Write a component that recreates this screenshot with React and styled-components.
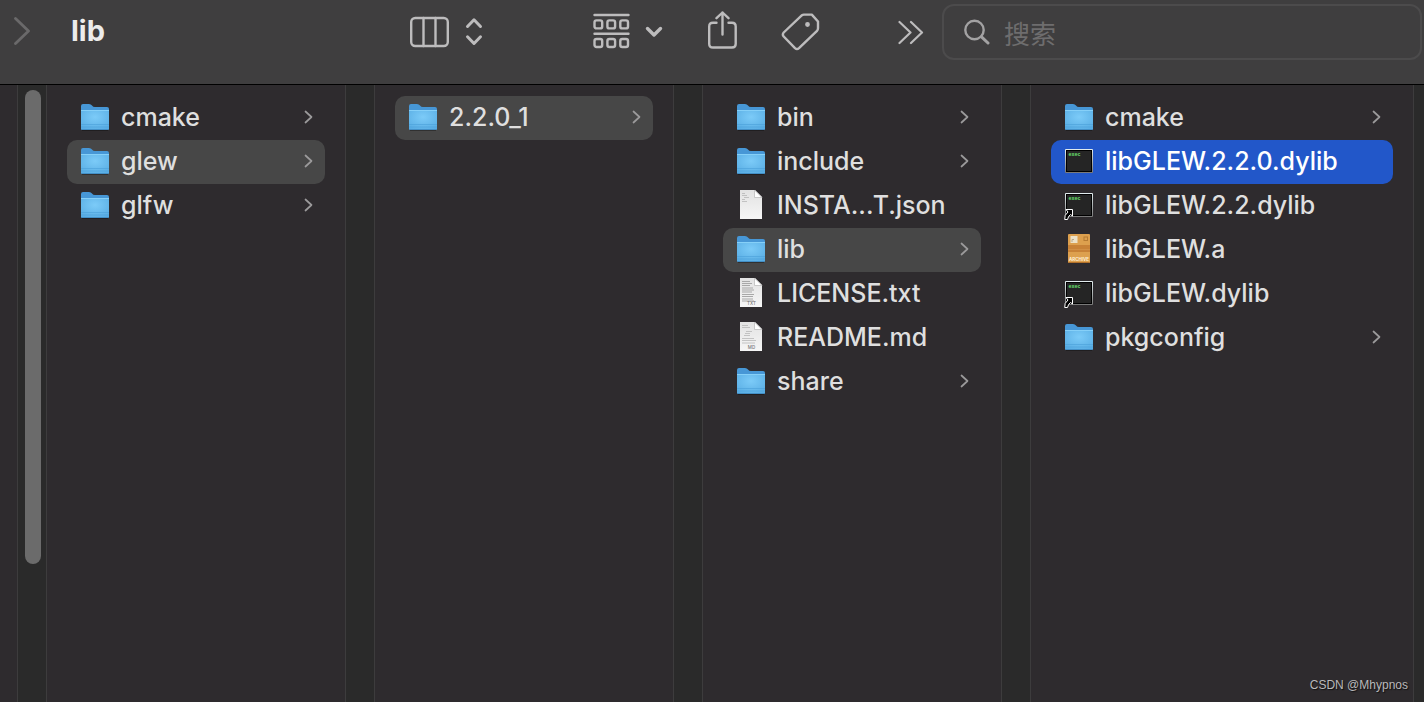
import React from 'react';
import styled, { createGlobalStyle } from 'styled-components';

const GlobalStyle = createGlobalStyle`
  * {
    box-sizing: border-box;
  }

  body {
    margin: 0;
    background: #2e2b2e;
    font-family: Inter, 'Noto Sans CJK SC', sans-serif;
  }

  button {
    border: 0;
    padding: 0;
    background: none;
    color: inherit;
    font: inherit;
  }

  svg {
    display: block;
    flex: none;
  }
`;

const Window = styled.div`
  display: flex;
  flex-direction: column;
  min-height: 100vh;
  overflow: hidden;
`;

const Toolbar = styled.header`
  display: flex;
  align-items: flex-start;
  padding: 4px 2px 24px 13px;
  background: #3f3e3f;
  color: #bdbcbd;
  border-bottom: 1px solid #000;
`;

const ToolButton = styled.button`
  display: flex;
  align-items: center;
  gap: ${({ $gap }) => $gap || 0}px;
  height: 56px;
  margin-right: ${({ $after }) => $after || 0}px;
  color: ${({ $dim }) => ($dim ? '#6a696a' : 'inherit')};
`;

const Title = styled.h1`
  flex: 0 1 339px;
  margin: 0;
  color: #ececec;
  font-size: 29px;
  font-weight: 700;
  line-height: 54px;
`;

const Search = styled.label`
  display: flex;
  flex: 1;
  align-items: center;
  gap: 14px;
  min-width: 0;
  height: 56px;
  padding: 0 20px;
  border: 2px solid #4c4b4c;
  border-radius: 12px;
  color: #a3a2a3;
`;

const SearchInput = styled.input`
  flex: 1;
  min-width: 0;
  height: 40px;
  padding: 0;
  border: 0;
  outline: 0;
  background: none;
  color: #dfdfdf;
  font-family: 'Noto Sans CJK SC', sans-serif;
  font-size: 26px;

  &::placeholder {
    color: #6e6d6e;
    opacity: 1;
  }
`;

const Browser = styled.main`
  display: flex;
  flex: 1;
`;

const Sliver = styled.div`
  flex: 0 0 17px;
`;

const Pane = styled.ul`
  flex: ${({ $fill }) => ($fill ? '1 1 0' : '0 0 298px')};
  margin: 0;
  padding: 11px 20px;
  list-style: none;
`;

const Track = styled.div`
  display: grid;
  flex: 0 0 ${({ $cut }) => ($cut ? 11 : 30)}px;
  grid-template-rows: 31fr 9fr;
  padding: ${({ $cut }) => ($cut ? '0' : '5px 5px 0 7px')};
  border: solid #3d3c3d;
  border-width: 0 ${({ $cut }) => ($cut ? 0 : 1)}px 0 1px;
  background: #2a2a2a;
`;

const Thumb = styled.div`
  border-radius: 8px;
  background: #6b6b6b;
`;

const backgrounds = { open: '#474747', active: '#2257c9' };

const Row = styled.button`
  display: flex;
  align-items: center;
  gap: 11px;
  width: 100%;
  height: 44px;
  padding: 0 11px 0 13px;
  border-radius: 10px;
  background: ${({ $state }) => backgrounds[$state] || 'transparent'};
  color: ${({ $state }) => ($state === 'active' ? '#fff' : '#dfdfdf')};
  font-size: 25px;
  font-weight: 500;
  line-height: 44px;
  text-align: left;
`;

const Name = styled.span`
  flex: 1;
  min-width: 0;
  height: 46px;
  white-space: nowrap;
`;

const Watermark = styled.div`
  position: absolute;
  right: 16px;
  bottom: 9px;
  color: #b9b8b9;
  font-family: 'Liberation Sans', sans-serif;
  font-size: 12px;
  line-height: 16px;
  text-shadow: 1px 1px 1px #111;
`;

const Defs = styled.svg`
  position: absolute;
`;

const Stroke = ({ w, h, width = 2, children }) => (
  <svg
    width={w}
    height={h}
    viewBox={`0 0 ${w} ${h}`}
    fill="none"
    stroke="currentColor"
    strokeWidth={width}
    strokeLinecap="round"
    strokeLinejoin="round"
    aria-hidden="true"
  >
    {children}
  </svg>
);

const ForwardIcon = () => (
  <Stroke w={20} h={30} width={2.8}>
    <path d="M2.5 1.5L15.5 14L2.5 26.5" />
  </Stroke>
);

const ColumnsIcon = () => (
  <Stroke w={40} h={32} width={2.4}>
    <rect x="1.2" y="2" width="36.6" height="28" rx="4" />
    <path d="M13.5 2V30M25.5 2V30" />
  </Stroke>
);

const UpDownIcon = () => (
  <Stroke w={18} h={30} width={3}>
    <path d="M2.500 9.500L9 2.800L15.500 9.500M2.500 19.800L9 26.500L15.500 19.800" />
  </Stroke>
);

const GroupIcon = () => (
  <Stroke w={38} h={38} width={2.4}>
    <path d="M1.5 2H35.500M1.500 20.800H35.500" />
    {[7.4, 26].map((y) =>
      [1.5, 14.4, 27.3].map((x) => (
        <rect key={`${x}-${y}`} x={x} y={y} width="7.700" height="8" rx="2" />
      ))
    )}
  </Stroke>
);

const DownIcon = () => (
  <Stroke w={18} h={12} width={3.4}>
    <path d="M2.5 2.5L9 9L15.5 2.5" />
  </Stroke>
);

const ShareIcon = () => (
  <Stroke w={32} h={42} width={2.4}>
    <path d="M9.500 11.800H6Q2.200 11.800 2.200 15.500V33Q2.200 36.500 6 36.500H25Q28.700 36.500 28.700 33V15.500Q28.700 11.800 25 11.800H21.500" />
    <path d="M15.500 23.500V1.500M9.500 7.200L15.500 1.500L21.500 7.200" />
  </Stroke>
);

const TagIcon = () => (
  <Stroke w={40} h={40} width={2.4}>
    <path d="M21 3.200L2.700 20.500Q1 22.500 2.700 24.500L14 36.200Q16 38 18 36.200L36 18.800Q37 17.800 37 16.300V9.500L30.800 2.600H22.800Q21.800 2.600 21 3.200Z" />
    <circle cx="26.500" cy="12.500" r="1.200" fill="currentColor" />
  </Stroke>
);

const MoreIcon = () => (
  <Stroke w={26} h={26} width={2.2}>
    <path d="M1.500 3L12.500 13.500L1.500 24M13 3L24 13.500L13 24" />
  </Stroke>
);

const SearchIcon = () => (
  <Stroke w={26} h={28} width={2.4}>
    <circle cx="10.500" cy="12" r="9.200" />
    <path d="M17.500 18.800L24 25" strokeWidth="3" />
  </Stroke>
);

const RowChevron = () => (
  <Stroke w={10} h={16} width={1.7}>
    <path d="M1.500 1.500L7.500 7L1.500 12.500" stroke="#9b9a9b" />
  </Stroke>
);

const FileSvg = ({ children }) => (
  <svg width="30" height="32" viewBox="0 0 30 32" aria-hidden="true">
    {children}
  </svg>
);

const FolderIcon = () => (
  <FileSvg>
    <path d="M1 27V4Q1 2 3 2H9Q11 2 12 3.500Q13 5 15 5H27Q29 5 29 7V27Z" fill="#4797d6" />
    <path d="M2 27.500H28V29H2Z" fill="#000" opacity=".3" />
    <path d="M1 8H29V26.500Q29 28 27.500 28H2.500Q1 28 1 26.500Z" fill="url(#folderFront)" />
    <path d="M1 8.500H29" stroke="#86d0f8" />
    <path d="M1 22.500H29M1 25H29" stroke="#4a9fd8" strokeWidth=".6" />
    <path d="M1.500 27.500H28.500" stroke="#438fc6" />
  </FileSvg>
);

// short strokes that stand for the text on the page thumbnails
const pageLines = {
  json: 'M6 3.500H9M6 5.500H11M8 7.500H13M6 9.500H9M6 11.500H11',
  txt: 'M6 3.500H14M6 5.500H16M6 7.500H14M6 10H17M6 12H18M6 14H16M6 16.500H18M6 18.500H17M6 21H17M6 23H18',
  md: 'M6 3.500H12M6 5.500H14M10 9.500H16M9 11.500H14M8 13.500H14M6 16.500H18M6 18.500H20M6 21H19',
};

const PageIcon = ({ kind, label }) => (
  <FileSvg>
    <path d="M4 0H19L26 7V29H4Z" fill="url(#page)" />
    <path d={pageLines[kind]} stroke="#a8a8a8" strokeWidth="1.1" opacity={kind === 'txt' ? 1 : 0.6} />
    <path d="M18.500 0V7.500H26Z" fill="#fff" stroke="#bcbcbc" strokeWidth=".8" />
    {label && (
      <text x="15.500" y="27" textAnchor="middle" fontSize="4.500" fontFamily="Inter" fill="#777">
        {label}
      </text>
    )}
  </FileSvg>
);

const ExecIcon = ({ alias }) => (
  <FileSvg>
    <rect x="1" y="3" width="28" height="24" rx="1" fill="url(#frame)" />
    <rect x="2" y="4" width="26" height="22" fill="#000" />
    <rect x="3" y="5" width="24" height="20" fill="#252525" />
    <text x="4.500" y="10" fontSize="5" fontWeight="700" fontFamily="Liberation Mono" fill="#6be06f">
      exec
    </text>
    {alias && (
      <path
        d="M2 19.500H8.500V26L6.500 24.500Q4.200 26 3.500 29.500H0.700Q0 25 4 22Z"
        fill="#000"
        stroke="#fff"
        strokeWidth="1"
      />
    )}
  </FileSvg>
);

const ArchiveIcon = () => (
  <FileSvg>
    <rect x="4" width="22" height="29" rx="1" fill="#dda04e" />
    <rect x="4" y="11" width="22" height="7" fill="#c88237" />
    <path d="M4 15.500H26" stroke="#d18f45" />
    <rect x="6.500" y="2" width="7" height="7" fill="#ede2c8" />
    <path d="M8 8V5.500H10" stroke="#b9a98b" fill="none" />
    <rect x="20" y="3" width="3.500" height="3.500" fill="none" stroke="#b67b33" />
    <path d="M4.500 28.500H25.500" stroke="#b4712a" />
    <text x="15" y="26.500" textAnchor="middle" fontSize="4.400" fontWeight="700" fontFamily="Inter" fill="#fff0d6">
      ARCHIVE
    </text>
  </FileSvg>
);

const SharedGradients = () => (
  <Defs width="0" height="0" aria-hidden="true">
    <defs>
      <radialGradient id="folderFront" cx=".5" cy=".35" r=".75">
        <stop offset="0" stopColor="#7ccbf8" />
        <stop offset="1" stopColor="#57ace3" />
      </radialGradient>
      <linearGradient id="page" x1="0" y1="0" x2="0" y2="1">
        <stop offset="0" stopColor="#e2e2e2" />
        <stop offset="1" stopColor="#f6f6f6" />
      </linearGradient>
      <linearGradient id="frame" x1="0" y1="0" x2="0" y2="1">
        <stop offset="0" stopColor="#e3eef0" />
        <stop offset="1" stopColor="#777" />
      </linearGradient>
    </defs>
  </Defs>
);

const icons = {
  folder: <FolderIcon />,
  json: <PageIcon kind="json" />,
  txt: <PageIcon kind="txt" label="TXT" />,
  md: <PageIcon kind="md" label="MD" />,
  exec: <ExecIcon />,
  alias: <ExecIcon alias />,
  archive: <ArchiveIcon />,
};

const panes = [
  [
    { name: 'cmake', icon: 'folder' },
    { name: 'glew', icon: 'folder', state: 'open' },
    { name: 'glfw', icon: 'folder' },
  ],
  [{ name: '2.2.0_1', icon: 'folder', state: 'open' }],
  [
    { name: 'bin', icon: 'folder' },
    { name: 'include', icon: 'folder' },
    { name: 'INSTA...T.json', icon: 'json' },
    { name: 'lib', icon: 'folder', state: 'open' },
    { name: 'LICENSE.txt', icon: 'txt' },
    { name: 'README.md', icon: 'md' },
    { name: 'share', icon: 'folder' },
  ],
  [
    { name: 'cmake', icon: 'folder' },
    { name: 'libGLEW.2.2.0.dylib', icon: 'exec', state: 'active' },
    { name: 'libGLEW.2.2.dylib', icon: 'alias' },
    { name: 'libGLEW.a', icon: 'archive' },
    { name: 'libGLEW.dylib', icon: 'alias' },
    { name: 'pkgconfig', icon: 'folder' },
  ],
];

const App = () => (
  <Window>
    <GlobalStyle />
    <SharedGradients />
    <Toolbar>
      <ToolButton $dim $after={38} aria-label="Forward">
        <ForwardIcon />
      </ToolButton>
      <Title>lib</Title>
      <ToolButton $gap={15} $after={110} aria-label="View">
        <ColumnsIcon />
        <UpDownIcon />
      </ToolButton>
      <ToolButton $gap={14} $after={44} aria-label="Group">
        <GroupIcon />
        <DownIcon />
      </ToolButton>
      <ToolButton $after={42} aria-label="Share">
        <ShareIcon />
      </ToolButton>
      <ToolButton $after={77} aria-label="Tags">
        <TagIcon />
      </ToolButton>
      <ToolButton $after={18} aria-label="More">
        <MoreIcon />
      </ToolButton>
      <Search>
        <SearchIcon />
        <SearchInput type="text" placeholder="搜索" aria-label="搜索" />
      </Search>
    </Toolbar>
    <Browser>
      <Sliver />
      <Track>
        <Thumb />
      </Track>
      {panes.map((files, i) => {
        const last = i === panes.length - 1;
        return (
          <React.Fragment key={i}>
            <Pane $fill={last}>
              {files.map((file) => (
                <li key={file.name}>
                  <Row $state={file.state}>
                    {icons[file.icon]}
                    <Name>{file.name}</Name>
                    {file.icon === 'folder' && <RowChevron />}
                  </Row>
                </li>
              ))}
            </Pane>
            <Track $cut={last} />
          </React.Fragment>
        );
      })}
    </Browser>
    <Watermark>CSDN @Mhypnos</Watermark>
  </Window>
);

export default App;
